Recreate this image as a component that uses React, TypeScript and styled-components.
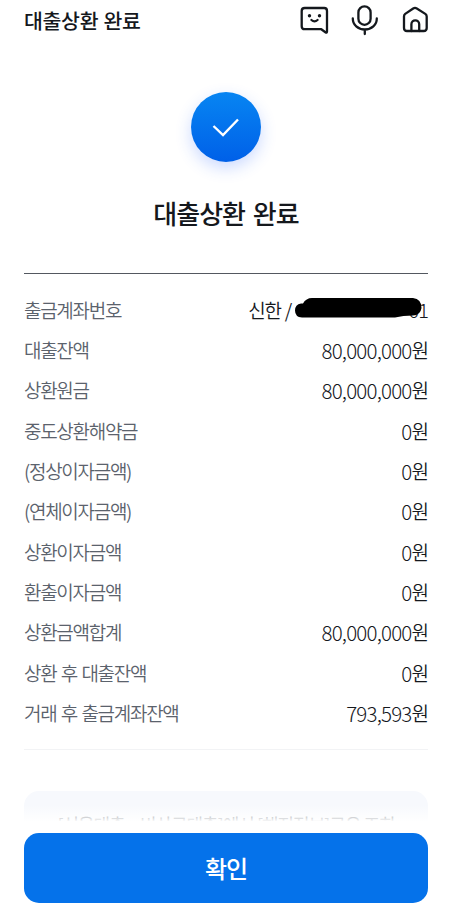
import React from 'react';
import styled, { createGlobalStyle } from 'styled-components';

const GlobalStyle = createGlobalStyle`
  * { box-sizing: border-box; }
  body {
    margin: 0;
    background: #fff;
    color: #15181d;
    font-family: 'Noto Sans CJK KR', 'Noto Sans', sans-serif;
    overflow: hidden;
  }
`;

const Screen = styled.div`
  height: 922px;
  padding: 0 23px 0 24px;
  display: flex;
  flex-direction: column;
`;

const Header = styled.header`
  height: 40px;
  flex: none;
  display: flex;
  align-items: center;
  justify-content: space-between;
`;

const HeaderTitle = styled.h1`
  margin: 0;
  font-size: 20.5px;
  font-weight: 500;
  line-height: 40px;
  letter-spacing: -0.3px;
  word-spacing: 1px;
  white-space: nowrap;
`;

const HeaderActions = styled.nav`
  display: flex;
  gap: 20px;
  margin-right: -2px;
`;

const IconButton = styled.button`
  width: 30px;
  height: 40px;
  padding: 0;
  border: 0;
  background: none;
  color: #14181d;
  svg { display: block; }
`;

const Hero = styled.section`
  height: 233px;
  flex: none;
  padding-top: 51.5px;
  display: flex;
  flex-direction: column;
  align-items: center;
`;

const Badge = styled.div`
  width: 70px;
  height: 70px;
  border-radius: 50%;
  background: linear-gradient(#0785f2, #0060e8);
  box-shadow: 0 6px 16px rgba(40, 100, 255, 0.24);
  svg { display: block; }
`;

const HeroTitle = styled.h2`
  margin: 31.5px 0 0;
  font-size: 26px;
  font-weight: 500;
  line-height: 40px;
  letter-spacing: -1px;
  word-spacing: 3px;
  white-space: nowrap;
`;

const Details = styled.dl`
  height: 477px;
  flex: none;
  margin: 0;
  padding-top: 15.6px;
  border-top: 1px solid #535860;
  border-bottom: 1px solid #f2f3f5;
`;

const Row = styled.div`
  height: 40.35px;
  display: flex;
  justify-content: space-between;
  font-size: 19px;
  font-weight: 350;
  line-height: 40px;
  white-space: nowrap;
`;

const Label = styled.dt`
  color: #5b626c;
  letter-spacing: -1.3px;
  word-spacing: 1.5px;
`;

const Value = styled.dd`
  margin: 0;
  display: flex;
`;

const Amount = styled.span`
  font-size: 20.5px;
  font-weight: 300;
  letter-spacing: -0.8px;
`;

const Unit = styled.span`
  margin-right: -1px;
`;

const Bank = styled.span`
  letter-spacing: -1.2px;
  word-spacing: 1px;
  margin-right: 4px;
`;

const Account = styled.span`
  position: relative;
  width: 133px;
  font-size: 20px;
  font-weight: 300;
  letter-spacing: -0.9px;
  text-align: right;
`;

const Redaction = styled.svg`
  position: absolute;
  left: 0;
  top: 7px;
`;

const Notice = styled.section`
  height: 30px;
  flex: none;
  margin-top: 41px;
  padding-top: 17px;
  position: relative;
  overflow: hidden;
  border-radius: 15px 15px 0 0;
  background: #f7f9fd;
  text-align: center;
  font-size: 18px;
  line-height: 32px;
  letter-spacing: -1px;
  white-space: nowrap;
  color: #535a64;
  &::after {
    content: '';
    position: absolute;
    inset: 14px 0 0;
    background: linear-gradient(rgba(255, 255, 255, 0), rgba(255, 255, 255, 0.95));
  }
`;

const ConfirmButton = styled.button`
  height: 70px;
  flex: none;
  margin-top: 12.4px;
  padding: 0 0 1px;
  border: 0;
  border-radius: 15px;
  background: #0572ea;
  color: #fff;
  font-family: inherit;
  font-size: 24px;
  font-weight: 500;
  letter-spacing: -1.2px;
`;

const rows = [
  ['대출잔액', '80,000,000'],
  ['상환원금', '80,000,000'],
  ['중도상환해약금', '0'],
  ['(정상이자금액)', '0'],
  ['(연체이자금액)', '0'],
  ['상환이자금액', '0'],
  ['환출이자금액', '0'],
  ['상환금액합계', '80,000,000'],
  ['상환 후 대출잔액', '0'],
  ['거래 후 출금계좌잔액', '793,593'],
];

const stroke = {
  fill: 'none',
  stroke: 'currentColor',
  strokeWidth: 2.3,
  strokeLinecap: 'round' as const,
  strokeLinejoin: 'round' as const,
};

const ChatIcon = () => (
  <svg width="30" height="40" viewBox="0 0 30 40" {...stroke}>
    <path d="M4.7 8H24.2Q27 8 27 11V31.5Q27 33.3 25.4 32.2L21.3 29.2H4.7Q1.7 29.2 1.7 26.2V11Q1.7 8 4.7 8Z" />
    <path d="M11.4 20Q14.5 22.8 17.6 20" strokeWidth="2.2" />
    <circle cx="9.5" cy="15.7" r="1.7" fill="currentColor" stroke="none" />
    <circle cx="19.5" cy="15.7" r="1.7" fill="currentColor" stroke="none" />
  </svg>
);

const MicIcon = () => (
  <svg width="30" height="40" viewBox="0 0 30 40" {...stroke}>
    <rect x="8.4" y="6.4" width="12.2" height="18.4" rx="6.1" />
    <path d="M2.8 18.5C2.8 25 8 29.5 14.8 29.5S26.8 25 26.8 18.5M14.8 29.5V34" />
  </svg>
);

const HomeIcon = () => (
  <svg width="30" height="40" viewBox="0 0 30 40" {...stroke}>
    <path d="M4 16.4Q4 14.8 5.2 13.9L13.2 8.5Q15 7.4 16.8 8.5L25.3 13.9Q26.7 15 26.7 16.5V28Q26.7 31 23.7 31H7Q4 31 4 28Z" />
    <path d="M11.4 31V24.2C11.4 19 19.2 19 19.2 24.2V31" />
  </svg>
);

export default function App() {
  return (
    <>
      <GlobalStyle />
      <Screen>
        <Header>
          <HeaderTitle>대출상환 완료</HeaderTitle>
          <HeaderActions>
            <IconButton aria-label="채팅"><ChatIcon /></IconButton>
            <IconButton aria-label="음성"><MicIcon /></IconButton>
            <IconButton aria-label="홈"><HomeIcon /></IconButton>
          </HeaderActions>
        </Header>
        <Hero>
          <Badge>
            <svg width="70" height="70" viewBox="0 0 70 70" fill="none">
              <path d="M22.5 34L32 43L47 27.5" stroke="#fff" strokeWidth="2.4" />
            </svg>
          </Badge>
          <HeroTitle>대출상환 완료</HeroTitle>
        </Hero>
        <Details>
          <Row>
            <Label>출금계좌번호</Label>
            <Value>
              <Bank>신한 /</Bank>
              <Account>
                01
                <Redaction width="128" height="22" viewBox="0 0 128 22">
                  <path d="M6 6.5H8Q11 1 17 1H118Q126.5 2 126.5 11Q125.5 18 118 18.6Q108 18.8 100 20.5H7Q0 20 0 13.5Q0 7.5 6 6.5Z" fill="#000" />
                </Redaction>
              </Account>
            </Value>
          </Row>
          {rows.map(([label, amount]) => (
            <Row key={label}>
              <Label>{label}</Label>
              <Value><Amount>{amount}</Amount><Unit>원</Unit></Value>
            </Row>
          ))}
        </Details>
        <Notice>[신용대출 · 비상금대출]에서 [해지정보]공유 조회</Notice>
        <ConfirmButton>확인</ConfirmButton>
      </Screen>
    </>
  );
}
